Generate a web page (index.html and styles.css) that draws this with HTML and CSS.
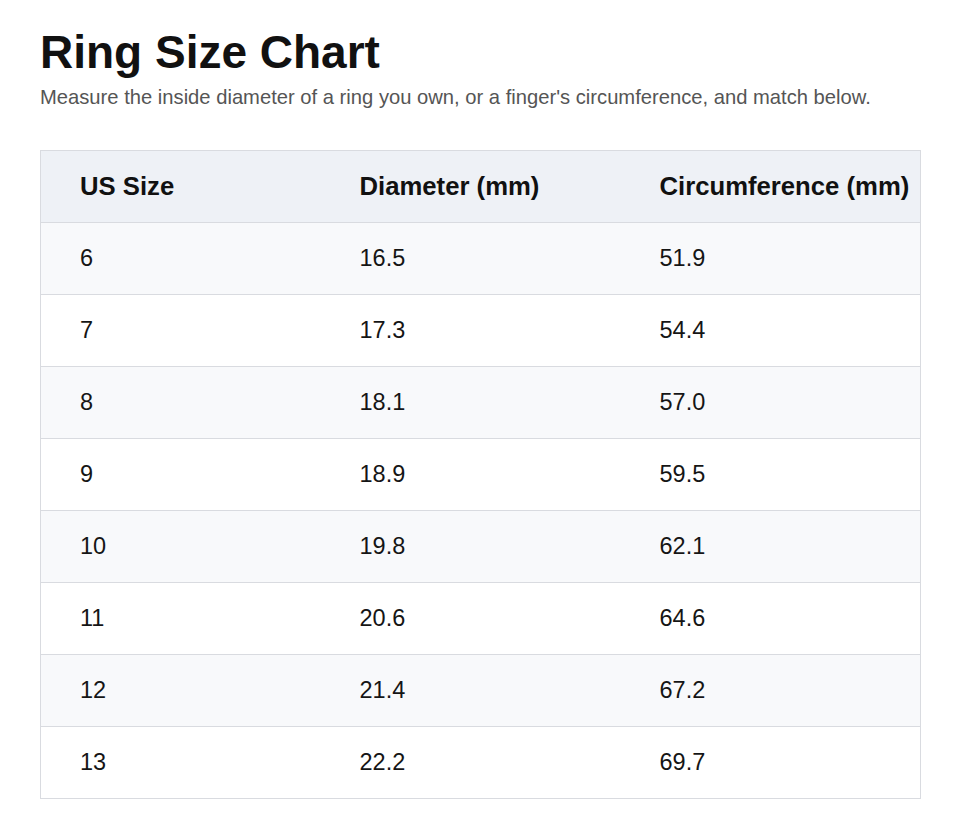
FILE: index.html
```html
<!DOCTYPE html>
<html lang="en">
<head>
<meta charset="utf-8">
<title>Ring Size Chart</title>
<link rel="stylesheet" href="styles.css">
</head>
<body>
<main class="page">
  <h1 class="title">Ring Size Chart</h1>
  <p class="subtitle">Measure the inside diameter of a ring you own, or a finger's circumference, and match below.</p>
  <table class="chart">
    <colgroup>
      <col class="c1"><col class="c2"><col class="c3">
    </colgroup>
    <thead>
      <tr><th>US Size</th><th>Diameter (mm)</th><th>Circumference (mm)</th></tr>
    </thead>
    <tbody>
      <tr><td>6</td><td>16.5</td><td>51.9</td></tr>
      <tr><td>7</td><td>17.3</td><td>54.4</td></tr>
      <tr><td>8</td><td>18.1</td><td>57.0</td></tr>
      <tr><td>9</td><td>18.9</td><td>59.5</td></tr>
      <tr><td>10</td><td>19.8</td><td>62.1</td></tr>
      <tr><td>11</td><td>20.6</td><td>64.6</td></tr>
      <tr><td>12</td><td>21.4</td><td>67.2</td></tr>
      <tr><td>13</td><td>22.2</td><td>69.7</td></tr>
    </tbody>
  </table>
</main>
</body>
</html>
```
FILE: styles.css
```css
html, body {
  margin: 0;
  padding: 0;
  background: #ffffff;
}
body {
  font-family: "Liberation Sans", Arial, sans-serif;
  color: #111111;
}
.page {
  padding: 24px 40px 0 40px;
}
.title {
  margin: 0;
  font-size: 46px;
  line-height: 56px;
  font-weight: 700;
  color: #111111;
}
.subtitle {
  margin: 4px 0 0 0;
  font-size: 20.2px;
  line-height: 26px;
  color: #555555;
}
.chart {
  margin-top: 40px;
  width: 880px;
  table-layout: fixed;
  border-collapse: collapse;
  border: 1px solid #d9dbe0;
}
.c1 { width: 280px; }
.c2 { width: 300px; }
.c3 { width: 300px; }
.chart th,
.chart td {
  padding: 0 0 0 39px;
  height: 71px;
  text-align: left;
  white-space: nowrap;
  border-bottom: 1px solid #d9dbe0;
}
.chart th {
  background: #eef1f6;
  font-size: 25.7px;
  font-weight: 700;
  color: #111111;
}
.chart td {
  font-size: 23.5px;
  color: #151515;
}
.chart tbody tr:nth-child(odd) td {
  background: #f8f9fb;
}
.chart tbody tr:nth-child(even) td {
  background: #ffffff;
}
```
